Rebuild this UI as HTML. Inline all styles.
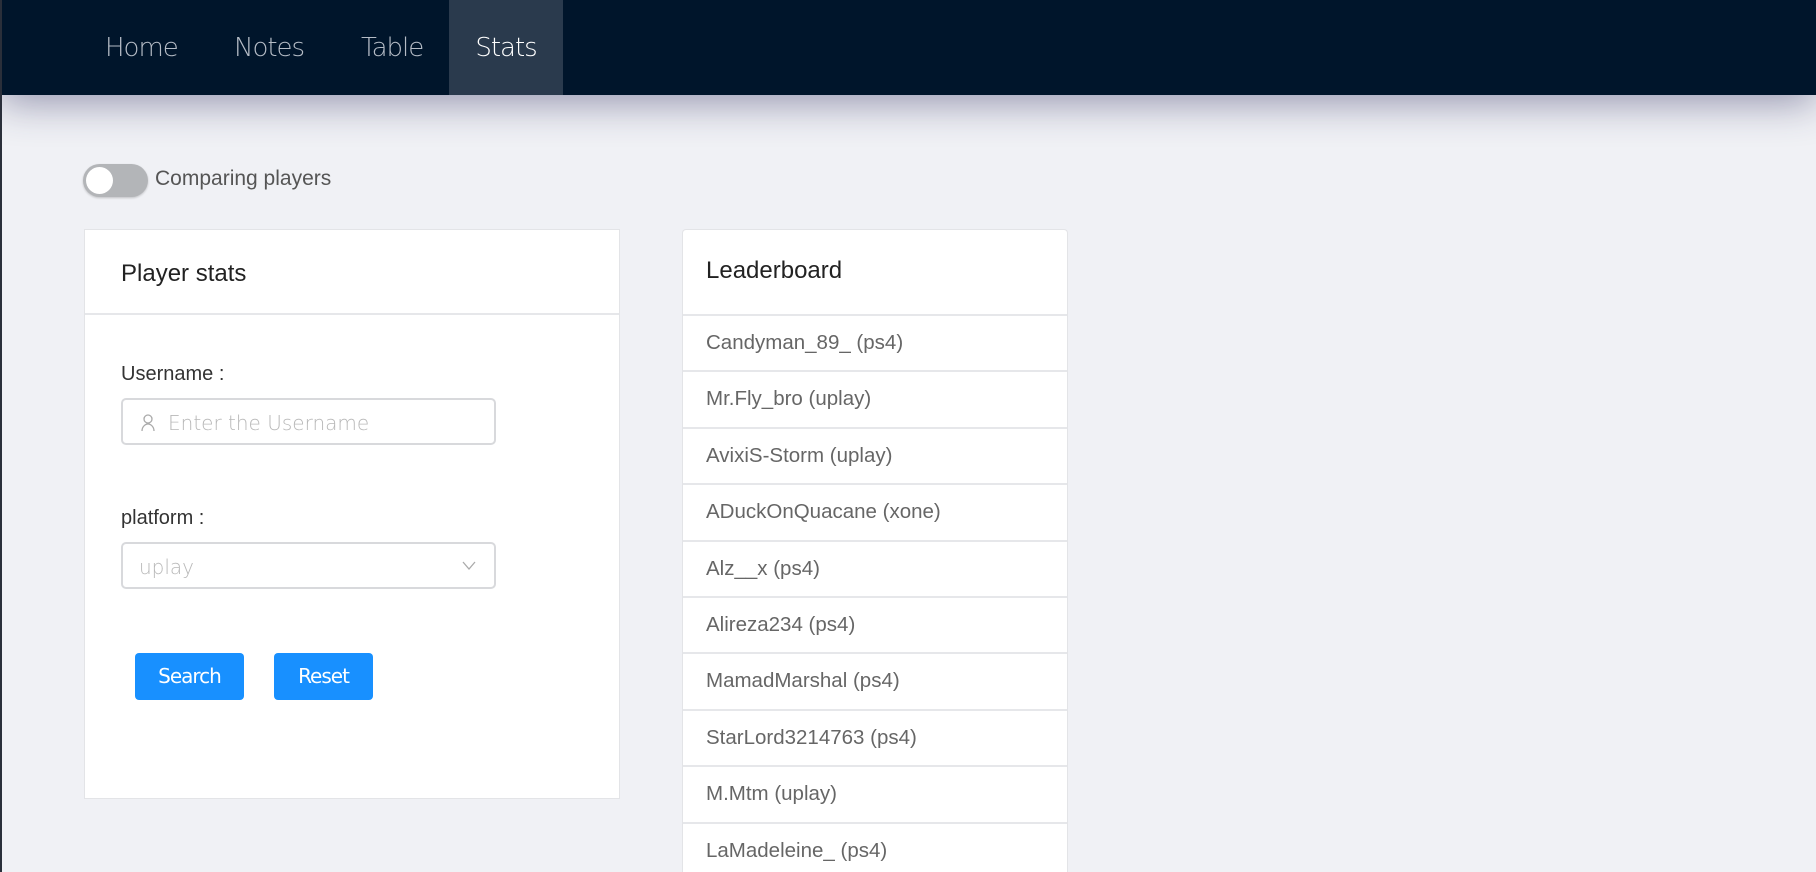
<!DOCTYPE html>
<html style="width:1816px;height:872px;overflow:hidden"><head><meta charset="utf-8"><style>
*{box-sizing:border-box;margin:0;padding:0}
body{width:1816px;height:872px;overflow:hidden;background:#f0f1f5;font-family:"Liberation Sans",sans-serif;position:relative}
.edge{position:absolute;left:0;top:0;width:2px;height:872px;background:#2a2f3a;z-index:5}
.nav{position:absolute;left:0;top:0;width:1816px;height:95px;background:#00152b;box-shadow:0 8px 40px rgba(40,40,90,.45)}
.nav a{position:absolute;top:0;height:95px;line-height:97px;font-size:26px;color:#b5bcc6;font-family:"DejaVu Sans","Liberation Sans",sans-serif;font-weight:200;letter-spacing:-1px}
.nav a.act{background:#2a3a4d;color:#fff;text-align:center}
.tog{position:absolute;left:83px;top:164px;width:65px;height:33px;border-radius:17px;background:#b3b5b8;box-shadow:0 1px 2px rgba(0,0,0,.2)}
.tog:after{content:"";position:absolute;left:3px;top:3px;width:27px;height:27px;border-radius:50%;background:#fff}
.card{position:absolute;background:#fff;border:1px solid #e3e4e7;overflow:hidden}
.hd{border-bottom:2px solid #e6e7ea;font-size:24px;color:#222}
.lbl{position:absolute;left:36px;font-size:20px;color:#333}
.inp{position:absolute;left:36px;width:375px;height:47px;border:2px solid #d8d9dc;border-radius:5px;font-size:20px;color:#b8b8b8;font-family:"DejaVu Sans",sans-serif;font-weight:200}
.btn{position:absolute;top:423px;height:47px;background:#1890ff;color:#fff;border-radius:4px;font-size:20px;text-align:center;line-height:47px;font-family:"DejaVu Sans",sans-serif;letter-spacing:-1px}
.row{height:56.4px;border-top:2px solid #e6e7ea;padding-left:23px;line-height:54px;font-size:20.5px;color:#666}
</style></head><body>
<div class="edge"></div>
<div class="nav">
<a style="left:105px">Home</a>
<a style="left:234px">Notes</a>
<a style="left:361px">Table</a>
<a class="act" style="left:449px;width:114px">Stats</a>
</div>
<div class="tog"></div>
<div style="position:absolute;left:155px;top:167px;font-size:21px;color:#555">Comparing players</div>

<div class="card" style="left:84px;top:229px;width:536px;height:570px">
<div class="hd" style="height:85px;padding:30px 0 0 36px">Player stats</div>
<div class="lbl" style="top:133px">Username :</div>
<div class="inp" style="top:168px;padding:11px 0 0 45px"><svg style="position:absolute;left:18px;top:14px" width="14" height="18" viewBox="0 0 14 18" fill="none" stroke="#aaa" stroke-width="1.3"><circle cx="7" cy="5" r="4"/><path d="M1 17c0-4 3-7 6-7s6 3 6 7"/></svg>Enter the Username</div>
<div class="lbl" style="top:277px">platform :</div>
<div class="inp" style="top:312px;padding:11px 0 0 16px">uplay<svg style="position:absolute;right:18px;top:17px" width="14" height="10" viewBox="0 0 14 10" fill="none" stroke="#aaa" stroke-width="1.3"><path d="M1 1l6 7 6-7"/></svg></div>
<div class="btn" style="left:50px;width:109px">Search</div>
<div class="btn" style="left:189px;width:99px">Reset</div>
</div>

<div class="card" style="left:682px;top:229px;width:386px;height:643px;border-radius:4px 4px 0 0;border-bottom:none">
<div class="hd" style="height:84px;padding:27px 0 0 23px;border-bottom:none">Leaderboard</div>
<div class="row">Candyman_89_ (ps4)</div>
<div class="row">Mr.Fly_bro (uplay)</div>
<div class="row">AvixiS-Storm (uplay)</div>
<div class="row">ADuckOnQuacane (xone)</div>
<div class="row">Alz__x (ps4)</div>
<div class="row">Alireza234 (ps4)</div>
<div class="row">MamadMarshal (ps4)</div>
<div class="row">StarLord3214763 (ps4)</div>
<div class="row">M.Mtm (uplay)</div>
<div class="row">LaMadeleine_ (ps4)</div>
</div>
</body></html>
